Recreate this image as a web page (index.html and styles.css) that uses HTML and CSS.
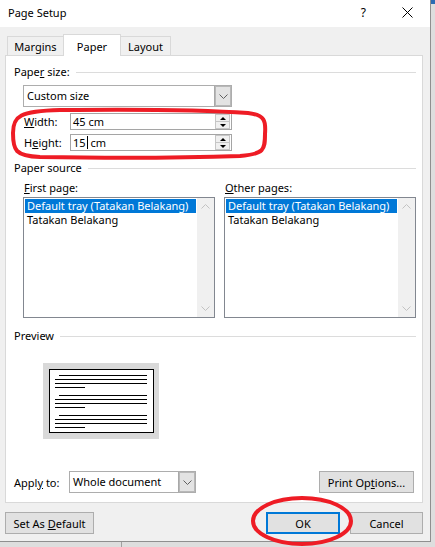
FILE: index.html
```html
<!DOCTYPE html>
<html>
<head>
<meta charset="utf-8">
<link rel="stylesheet" href="styles.css">
</head>
<body>
<div class="dialog">
  <div class="titlebar">
    <span class="title">Page Setup</span>
    <span class="help">?</span>
    <svg class="close" width="11" height="11" viewBox="0 0 11 11"><path d="M0.5 0.5 L10.5 10.5 M10.5 0.5 L0.5 10.5" stroke="#000" stroke-width="1" fill="none"/></svg>
  </div>
  <div class="body">
    <div class="tabs">
      <div class="tab tab-margins">Margins</div>
      <div class="tab tab-paper active">Paper</div>
      <div class="tab tab-layout">Layout</div>
    </div>
    <div class="panel">
      <div class="group-head gh-size"><span>Pape<u>r</u> size:</span><span class="rule"></span></div>
      <div class="combo combo-size">
        <span class="combo-text">Custom size</span>
        <span class="combo-btn"><svg width="9" height="5" viewBox="0 0 9 5"><path d="M0.5 0.5 L4.5 4.5 L8.5 0.5" stroke="#606060" fill="none"/></svg></span>
      </div>
      <div class="field-row fr-width">
        <span class="field-label"><u>W</u>idth:</span>
        <div class="spin">
          <span class="spin-text">45 cm</span>
          <span class="spin-btns"><span class="spin-up"><i class="tri-up"></i></span><span class="spin-down"><i class="tri-down"></i></span></span>
        </div>
      </div>
      <div class="field-row fr-height">
        <span class="field-label">H<u>e</u>ight:</span>
        <div class="spin">
          <span class="spin-text">15<span class="caret"></span>cm</span>
          <span class="spin-btns"><span class="spin-up"><i class="tri-up"></i></span><span class="spin-down"><i class="tri-down"></i></span></span>
        </div>
      </div>

      <div class="group-head gh-source"><span>Paper source</span><span class="rule"></span></div>
      <div class="source-cols">
        <div class="source-col">
          <div class="col-label"><u>F</u>irst page:</div>
          <div class="listbox">
            <div class="items">
              <div class="item sel">Default tray (Tatakan Belakang)</div>
              <div class="item">Tatakan Belakang</div>
            </div>
            <div class="vscroll">
              <span class="sarrow"><svg width="9" height="5" viewBox="0 0 9 5"><path d="M0.5 4.5 L4.5 0.5 L8.5 4.5" stroke="#c2c2c2" fill="none"/></svg></span>
              <span class="sarrow"><svg width="9" height="5" viewBox="0 0 9 5"><path d="M0.5 0.5 L4.5 4.5 L8.5 0.5" stroke="#c2c2c2" fill="none"/></svg></span>
            </div>
          </div>
        </div>
        <div class="source-col">
          <div class="col-label"><u>O</u>ther pages:</div>
          <div class="listbox">
            <div class="items">
              <div class="item sel">Default tray (Tatakan Belakang)</div>
              <div class="item">Tatakan Belakang</div>
            </div>
            <div class="vscroll">
              <span class="sarrow"><svg width="9" height="5" viewBox="0 0 9 5"><path d="M0.5 4.5 L4.5 0.5 L8.5 4.5" stroke="#c2c2c2" fill="none"/></svg></span>
              <span class="sarrow"><svg width="9" height="5" viewBox="0 0 9 5"><path d="M0.5 0.5 L4.5 4.5 L8.5 0.5" stroke="#c2c2c2" fill="none"/></svg></span>
            </div>
          </div>
        </div>
      </div>

      <div class="group-head gh-preview"><span>Preview</span><span class="rule"></span></div>
      <div class="preview">
        <svg width="116" height="76" viewBox="0 0 116 76">
          <rect x="0" y="0" width="116" height="76" fill="#d9d9d9"/>
          <rect x="6.5" y="6.5" width="104" height="63" fill="#fff" stroke="#000"/>
          <g stroke="#000" stroke-width="1">
            <path d="M16 12.5 H104 M12 16.5 H104 M12 20.5 H104 M12 24.5 H42"/>
            <path d="M16 32.5 H104 M12 36.5 H104 M12 40.5 H104 M12 44.5 H42"/>
            <path d="M16 52.5 H104 M12 56.5 H104 M12 60.5 H104 M12 64.5 H42"/>
          </g>
        </svg>
      </div>

      <div class="apply-row">
        <span class="apply-label">Appl<u>y</u> to:</span>
        <div class="combo combo-apply">
          <span class="combo-text">Whole document</span>
          <span class="combo-btn"><svg width="9" height="5" viewBox="0 0 9 5"><path d="M0.5 0.5 L4.5 4.5 L8.5 0.5" stroke="#606060" fill="none"/></svg></span>
        </div>
        <div class="btn btn-print"><span>Print Op<u>t</u>ions...</span></div>
      </div>
    </div>
    <div class="button-row">
      <div class="btn btn-default"><span>Set As <u>D</u>efault</span></div>
      <div class="btn btn-ok"><span>OK</span></div>
      <div class="btn btn-cancel"><span>Cancel</span></div>
    </div>
  </div>
</div>
<svg class="marks" width="435" height="547" viewBox="0 0 435 547">
  <path d="M60 110 C150 109 220 111 248 113 C265 115 266 121 265 134 C265 150 264 154 240 156 C180 158 100 158 40 157 C15 156 13 150 13 133 C13 116 20 111 60 110 Z" fill="none" stroke="#ee1c25" stroke-width="4"/>
  <ellipse cx="302" cy="521" rx="49" ry="23" fill="none" stroke="#ee1c25" stroke-width="4"/>
</svg>
</body>
</html>
```

FILE: styles.css
```css
* { box-sizing: border-box; }
html, body { margin: 0; padding: 0; }
body {
  position: relative;
  width: 435px;
  height: 547px;
  overflow: hidden;
  font-family: "Noto Sans", "Open Sans", sans-serif;
  font-size: 11px;
  color: #000;
  background:
    linear-gradient(#2d6bb3, #2d6bb3) right top / 4px 4px no-repeat,
    linear-gradient(#a0a0a0, #a0a0a0) 121px 542px / 1px 5px no-repeat,
    #dedede;
}
u { text-decoration: underline; text-underline-offset: 1px; }

.dialog {
  width: 431px;
  height: 542px;
  background: #f0f0f0;
  border-right: 1px solid #8f8f8f;
  border-bottom: 1px solid #8f8f8f;
  display: flex;
  flex-direction: column;
}

.titlebar {
  flex: none;
  height: 27px;
  background: #fff;
  display: flex;
  align-items: center;
  padding: 0 17px 2px 8px;
}
.title { flex: 1; }
.help { margin-right: 36px; font-size: 12px; }
.close { display: block; }

.body {
  flex: 1;
  display: flex;
  flex-direction: column;
  padding: 0 7px 0 5px;
}

.tabs {
  display: flex;
  align-items: flex-end;
  height: 21px;
  margin-top: 7px;
  padding-left: 2px;
}
.tab {
  height: 19px;
  border: 1px solid #d9d9d9;
  border-bottom: none;
  margin-right: -1px;
  background: #f0f0f0;
  display: flex;
  align-items: center;
  justify-content: center;
  padding-top: 1px;
}
.tab.active {
  height: 22px;
  background: #fff;
  margin-bottom: -1px;
  position: relative;
  z-index: 1;
}
.tab-margins { width: 57px; }
.tab-paper { width: 58px; }
.tab-layout { width: 51px; }

.panel {
  height: 448px;
  border: 1px solid #d9d9d9;
  background: #fff;
  padding: 0 6px 0 8px;
  display: flex;
  flex-direction: column;
}

.group-head {
  display: flex;
  align-items: center;
  height: 16px;
  line-height: 16px;
  gap: 6px;
}
.rule { flex: 1; height: 1px; background: #dcdcdc; }
.gh-size { margin-top: 8px; }
.gh-source { margin-top: 9px; }
.gh-preview { margin-top: 10px; }

.combo {
  display: flex;
  height: 22px;
  border: 1px solid #adadad;
  background: #fff;
}
.combo-text { flex: 1; padding-left: 3px; line-height: 19px; white-space: nowrap; }
.combo-btn {
  width: 17px;
  background: #e3e3e3;
  border-left: 1px solid #a8a8a8;
  box-shadow: inset 0 0 0 1px #b8b8b8;
  display: flex;
  align-items: center;
  justify-content: center;
}
.combo-size { width: 209px; margin-top: 5px; margin-left: 9px; }
.combo-apply { width: 127px; }

.field-row { display: flex; align-items: center; height: 17px; }
.fr-width { margin-top: 6px; }
.fr-height { margin-top: 4px; }
.field-label { width: 46px; margin-left: 10px; }
.spin {
  width: 162px;
  height: 17px;
  border: 1px solid #a5a5a5;
  display: flex;
}
.spin-text { flex: 1; padding-left: 2px; line-height: 14px; display: flex; align-items: center; white-space: pre; }
.caret { display: inline-block; width: 1px; height: 13px; background: #000; margin: 0 3px 0 1px; }
.spin-btns { width: 16px; display: flex; flex-direction: column; padding: 0 1px 0 0; }
.spin-up, .spin-down {
  flex: 1;
  border: 1px solid #c6c6c6;
  background: #f0f0f0;
  display: flex;
  align-items: center;
  justify-content: center;
}
.spin-down { border-top: none; }
.tri-up, .tri-down { display: block; width: 0; height: 0; border-left: 3px solid transparent; border-right: 3px solid transparent; }
.tri-up { border-bottom: 3px solid #000; }
.tri-down { border-top: 3px solid #000; }

.source-cols {
  display: grid;
  grid-template-columns: 192px 192px;
  column-gap: 9px;
  margin-left: 9px;
  margin-top: 4px;
}
.col-label { line-height: 16px; height: 16px; padding-left: 1px; }
.listbox {
  margin-top: 1px;
  height: 121px;
  border: 1px solid #828790;
  display: flex;
  background: #fff;
}
.items { flex: 1; padding: 1px; }
.item { height: 14px; line-height: 14px; padding-left: 2px; white-space: nowrap; }
.item.sel { background: #0078d7; color: #fff; }
.vscroll {
  width: 17px;
  background: #f0f0f0;
  display: flex;
  flex-direction: column;
  justify-content: space-between;
}
.sarrow { height: 17px; display: flex; align-items: center; justify-content: center; }

.preview { margin-top: 19px; margin-left: 29px; height: 76px; }
.preview svg { display: block; }

.apply-row {
  display: flex;
  align-items: center;
  margin-top: 32px;
  height: 22px;
}
.apply-label { width: 55px; }

.btn {
  height: 22px;
  background: #e1e1e1;
  border: 1px solid #adadad;
  display: flex;
  align-items: center;
  justify-content: center;
  white-space: nowrap;
}
.btn-print { width: 95px; margin-left: auto; margin-right: 2px; }

.button-row { display: flex; margin-top: 9px; }
.btn-default { width: 89px; }
.btn-ok { width: 74px; margin-left: auto; border: 2px solid #0078d7; }
.btn-cancel { width: 73px; margin-left: 10px; }

.marks { position: absolute; left: 0; top: 0; pointer-events: none; }
```
